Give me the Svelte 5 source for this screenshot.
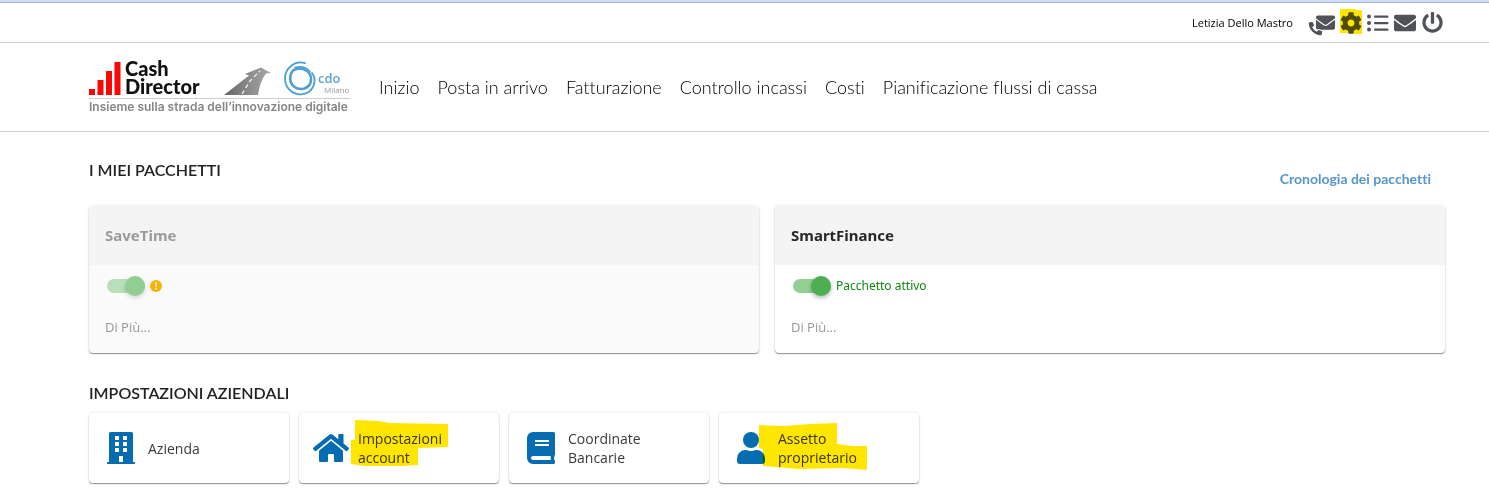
<script>
  const nav = ['Inizio', 'Posta in arrivo', 'Fatturazione', 'Controllo incassi', 'Costi', 'Pianificazione flussi di cassa'];

  const envelope =
    'M502.3 190.8c3.9-3.1 9.7-.2 9.7 4.7V400c0 26.5-21.5 48-48 48H48c-26.5 0-48-21.5-48-48V195.6c0-5 5.7-7.8 9.7-4.7 22.4 17.4 52.1 39.5 154.1 113.6 21.1 15.4 56.7 47.8 92.2 47.6 35.7.3 72-32.8 92.3-47.6 102-74.1 131.6-96.3 154-113.7zM256 320c23.2.4 56.6-29.2 73.4-41.4 132.7-96.3 142.8-104.7 173.4-128.7 5.8-4.5 9.2-11.5 9.2-18.9v-19c0-26.5-21.5-48-48-48H48c-26.5 0-48 21.5-48 48v19c0 7.4 3.4 14.3 9.2 18.9 30.6 23.9 40.7 32.4 173.4 128.7 16.8 12.2 50.2 41.8 73.4 41.4z';
  const handset =
    'M497.39 361.8l-112-48a24 24 0 0 0-28 6.900l-49.600 60.600A370.66 370.66 0 0 1 130.600 204.110l60.600-49.600a23.940 23.940 0 0 0 6.900-28l-48-112A24.160 24.160 0 0 0 122.600.61l-104 24A24 24 0 0 0 0 48c0 256.500 207.900 464 464 464a24 24 0 0 0 23.400-18.600l24-104a24.290 24.290 0 0 0-14.010-27.600z';
  const gear =
    'M487.4 315.7l-42.6-24.6c4.3-23.2 4.3-47 0-70.2l42.6-24.6c4.9-2.8 7.1-8.6 5.5-14-11.1-35.6-30-67.8-54.7-94.6-3.8-4.1-10-5.1-14.8-2.3L380.8 110c-17.9-15.4-38.5-27.3-60.8-35.1V25.8c0-5.6-3.9-10.5-9.4-11.7-36.7-8.2-74.3-7.8-109.2 0-5.5 1.2-9.4 6.1-9.4 11.7V75c-22.2 7.9-42.8 19.8-60.8 35.1L88.7 85.5c-4.9-2.8-11-1.9-14.8 2.3-24.7 26.7-43.6 58.9-54.7 94.6-1.7 5.4.6 11.2 5.5 14L67.3 221c-4.3 23.2-4.3 47 0 70.2l-42.6 24.6c-4.9 2.8-7.1 8.6-5.5 14 11.1 35.6 30 67.8 54.7 94.6 3.8 4.1 10 5.1 14.8 2.3l42.6-24.6c17.9 15.4 38.5 27.3 60.8 35.1v49.2c0 5.6 3.9 10.5 9.4 11.7 36.7 8.2 74.3 7.8 109.2 0 5.5-1.2 9.4-6.1 9.4-11.7v-49.2c22.2-7.9 42.8-19.8 60.8-35.1l42.6 24.6c4.9 2.8 11 1.9 14.8-2.3 24.7-26.7 43.6-58.9 54.7-94.6 1.5-5.5-.7-11.3-5.6-14.1zM256 336c-44.1 0-80-35.9-80-80s35.9-80 80-80 80 35.9 80 80-35.9 80-80 80z';
  const power =
    'M400 54.1c63 45 104 118.6 104 201.9 0 136.8-110.8 247.7-247.5 248C120 504.3 8.2 393 8 256.4 7.9 173.1 48.9 99.3 111.8 54.2c11.7-8.3 28-4.8 35 7.7L162.6 90c5.9 10.5 3.1 23.8-6.6 31-41.5 30.8-68 79.6-68 134.9-.1 92.3 74.5 168.1 168 168.1 91.6 0 168.6-74.2 168-169.1-.3-51.8-24.7-101.8-68.1-134-9.7-7.2-12.4-20.5-6.5-30.9l15.8-28.1c7-12.4 23.2-16.1 34.8-7.8zM296 264V24c0-13.3-10.7-24-24-24h-32c-13.3 0-24 10.7-24 24v240c0 13.3 10.7 24 24 24h32c13.3 0 24-10.7 24-24z';

  let packages = [
    { id: 'savetime', name: 'SaveTime', on: true, muted: true },
    { id: 'smartfinance', name: 'SmartFinance', on: true, muted: false }
  ];
</script>

<div class="strip"></div>

<div class="topbar">
  <span class="user">Letizia Dello Mastro</span>
  <div class="tools">
    <button class="tool wide" aria-label="Contatti">
      <svg width="26" height="24" viewBox="0 0 26 24">
        <svg x="8" y="0" width="19" height="19" viewBox="0 0 512 512"><path d={envelope} /></svg>
        <svg class="handset" x="0" y="8" width="15" height="15" viewBox="-30 -30 572 572"><path d={handset} /></svg>
      </svg>
    </button>
    <button class="tool" aria-label="Impostazioni">
      <svg width="22" height="22" viewBox="0 0 512 512"><path d={gear} /></svg>
      <svg class="marker gear-mark" width="22" height="27" viewBox="0 0 22 27"><path d="M0 1H16V2H22V26H11V25H0z" /></svg>
    </button>
    <button class="tool" aria-label="Elenco">
      <svg width="22" height="18" viewBox="0 0 22 18">
        <circle cx="2" cy="2.500" r="2" /><circle cx="2" cy="9" r="2" /><circle cx="2" cy="15.500" r="2" />
        <rect x="7" y="1.500" width="14.500" height="2.200" rx="1" /><rect x="7" y="8" width="14.500" height="2.200" rx="1" /><rect x="7" y="14.500" width="14.500" height="2.200" rx="1" />
      </svg>
    </button>
    <button class="tool" aria-label="Messaggi">
      <svg width="22" height="22" viewBox="0 0 512 512"><path d={envelope} /></svg>
    </button>
    <button class="tool" aria-label="Esci">
      <svg width="21" height="21" viewBox="0 0 512 512"><path d={power} /></svg>
    </button>
  </div>
</div>

<header>
  <a class="logo" href="#home" aria-label="Cash Director">
    <svg width="262" height="56" viewBox="0 0 262 56">
      <defs>
        <linearGradient id="road" x1="0" y1="0" x2="1" y2="0">
          <stop offset="0" stop-color="#666" /><stop offset="1" stop-color="#aaa" />
        </linearGradient>
      </defs>
      <g fill="#fb0507">
        <rect x="0" y="28" width="6" height="6" /><rect x="8.500" y="19" width="6" height="15" />
        <rect x="17" y="10" width="6" height="24" /><rect x="25.500" y="1" width="6" height="33" />
      </g>
      <text class="brand" x="36" y="15">Cash</text>
      <text class="brand" x="36" y="33">Director</text>
      <path fill="url(#road)" d="M135 34 160 14.500 156 13 172 6.500 182 12 177 12.500Q171 20 169 34Z" />
      <path fill="none" stroke="#fff" stroke-width="1.200" stroke-dasharray="4 3" d="M153 33 161 20 171 10" />
      <g fill="none" stroke="#4b9fd5" stroke-linecap="round">
        <path stroke-width="1.800" d="M216 2.200C206 -1 196 7 196 17.500C196 28 205 34.500 214 33.200C224 31.500 229 20 223 12" />
        <path stroke-width="2.600" d="M204 9.500C213 4 223 11 222 19.500C221 28 211 30 205.500 26C200 22 200 14 204 9.500" />
        <path stroke-width="1.500" d="M206 6.500C211 5 217 6 221 10.500" />
      </g>
      <text class="cdo" x="229" y="22">cdo</text>
      <text class="city" x="235" y="32">Milano</text>
      <rect x="0" y="37" width="261" height="1" fill="#ccc" />
      <text class="slogan" x="0" y="50">Insieme sulla strada dell’innovazione digitale</text>
    </svg>
  </a>
  <nav>
    {#each nav as item}<a href="#nav">{item}</a>{/each}
  </nav>
</header>

<main>
  <div class="heading">
    <h2>I MIEI PACCHETTI</h2>
    <a class="history" href="#cronologia">Cronologia dei pacchetti</a>
  </div>

  <div class="packages">
    {#each packages as p}
      <section class="package" class:muted={p.muted}>
        <h3>{p.name}</h3>
        <div class="body">
          <div class="state">
            <input id={p.id} class="switch" type="checkbox" role="switch" bind:checked={p.on} aria-label={p.name} />
            {#if p.muted}
              <svg class="warn" width="12" height="12" viewBox="0 0 12 12">
                <circle cx="6" cy="6" r="6" fill="#fbb003" />
                <path d="M5.100 2.600h1.800L6.600 6.900H5.400z" fill="#fff" /><circle cx="6" cy="8.700" r=".9" fill="#fff" />
              </svg>
            {:else}
              <label for={p.id}>Pacchetto attivo</label>
            {/if}
          </div>
          <a class="more" href="#more">Di Più...</a>
        </div>
      </section>
    {/each}
  </div>

  <h2>IMPOSTAZIONI AZIENDALI</h2>
  <div class="tiles">
    <a class="tile" href="#azienda">
      <span class="icon">
        <svg width="28" height="32" viewBox="0 0 28 32">
          <path fill-rule="evenodd" d="M3.500 0h21A1.500 1.500 0 0 1 26 1.500V30h1.200a.8.800 0 0 1 .8.800V32H0v-1.200A.8.800 0 0 1 .8 30H2V1.500A1.500 1.500 0 0 1 3.500 0zM8 4v4h4V4zM16 4v4h4V4zM8 10v4h4v-4zM16 10v4h4v-4zM8 16v4h4v-4zM16 16v4h4v-4zM12 24v6h4v-6z" />
        </svg>
      </span>
      <span>Azienda</span>
    </a>
    <a class="tile" href="#account">
      <span class="icon">
        <svg width="36" height="28" viewBox="0 0 36 28">
          <path d="M17.500 7.300 6 16.800V27a1 1 0 0 0 1 1h7a1 1 0 0 0 1-1v-6a1 1 0 0 1 1-1h4a1 1 0 0 1 1 1v6a1 1 0 0 0 1 1h7a1 1 0 0 0 1-1V16.700L18.600 7.300a.9.900 0 0 0-1.100 0z" />
          <path d="M35.700 13.700 30.500 9.400V.8a.8.800 0 0 0-.8-.8h-3.600a.8.800 0 0 0-.8.800v4.500L19.700.700a2.700 2.700 0 0 0-3.400 0L.3 13.700a.8.800 0 0 0-.1 1.200l1.600 2a.8.800 0 0 0 1.200.1L17.500 5.200a.9.900 0 0 1 1 0L33 17a.8.800 0 0 0 1.200-.1l1.600-2a.8.800 0 0 0-.1-1.200z" />
        </svg>
      </span>
      <span>Impostazioni account</span>
      <svg class="marker account-mark" width="98" height="46" viewBox="0 0 98 46"><path d="M4 0 28 1 38 3 97 4V27L67 28V45L52 46H14L0 44V20H4z" /></svg>
    </a>
    <a class="tile" href="#banca">
      <span class="icon">
        <svg width="28" height="32" viewBox="0 0 28 32">
          <path fill-rule="evenodd" d="M6 0H26.500A1.500 1.500 0 0 1 28 1.500V22.500A1.500 1.500 0 0 1 27.400 23.700Q26.800 26 27.400 28.300A1.500 1.500 0 0 1 28 29.500V30.500A1.500 1.500 0 0 1 26.500 32H6A6 6 0 0 1 0 26V6A6 6 0 0 1 6 0zM8.400 8a.4.400 0 0 0-.4.400v1.200c0 .2.200.4.400.4h13.200a.4.400 0 0 0 .4-.4V8.400a.4.400 0 0 0-.4-.4zM8.400 12a.4.400 0 0 0-.4.400v1.200c0 .2.200.4.400.4h13.200a.4.400 0 0 0 .4-.4v-1.200a.4.400 0 0 0-.4-.4zM6 24a2 2 0 0 0 0 4H23.800Q23.500 26 23.800 24z" />
        </svg>
      </span>
      <span>Coordinate Bancarie</span>
    </a>
    <a class="tile" href="#assetto">
      <span class="icon">
        <svg width="28" height="32" viewBox="0 0 28 32">
          <circle cx="14" cy="8" r="8" />
          <path d="M19.600 18h-1a11 11 0 0 1-9.200 0h-1A8.400 8.400 0 0 0 0 26.400V29a3 3 0 0 0 3 3H25a3 3 0 0 0 3-3V26.400A8.400 8.400 0 0 0 19.600 18z" />
        </svg>
      </span>
      <span>Assetto proprietario</span>
      <svg class="marker owner-mark" width="109" height="48" viewBox="0 0 109 48"><path d="M0 2 24 3 52 1 78 0V21L94 23H108V47L84 45 40 46 4 43V26L0 25z" /></svg>
    </a>
  </div>
</main>

<style>
  :global(body) {
    margin: 0;
    background: #fff;
    color: #272727;
    font-family: 'Open Sans', sans-serif;
    font-variant-ligatures: none;
  }
  a { color: inherit; text-decoration: none; }
  svg { display: block; flex: none; overflow: visible; }
  .strip { height: 2px; background: #cfdff8; border-bottom: 1px solid #a3b5cf; }
  .topbar {
    display: flex;
    align-items: center;
    justify-content: flex-end;
    gap: 14px;
    height: 39px;
    padding-right: 46px;
    border-bottom: 1px solid #cfcfcf;
  }
  .user { font-size: 11px; color: #000; }
  .tools { display: flex; align-items: center; gap: 5px; }
  .tool {
    position: relative;
    display: grid;
    place-items: center;
    width: 22px;
    height: 26px;
    padding: 0;
    border: 0;
    background: none;
    fill: #4f5357;
  }
  .tool.wide { width: 28px; padding-top: 3px; }
  .handset { stroke: #fff; stroke-width: 70px; paint-order: stroke; }
  .marker { position: absolute; fill: #ffe600; mix-blend-mode: multiply; pointer-events: none; }
  .gear-mark { left: 0; top: -2px; }
  header {
    display: flex;
    align-items: center;
    gap: 28px;
    height: 88px;
    padding-left: 89px;
    border-bottom: 1px solid #cfcfcf;
  }
  .logo { padding-top: 4px; }
  .brand { font: 900 20px Lato, sans-serif; fill: #111; }
  .cdo { font: 600 13px 'Open Sans', sans-serif; fill: #5ba6d8; }
  .city { font: 400 8px 'Open Sans', sans-serif; fill: #999; }
  .slogan { font: 600 12px Inter, sans-serif; fill: #858585; }
  nav { display: flex; gap: 18px; font: 300 18px/24px Lato, sans-serif; color: #000; font-variant-ligatures: none; }
  main { padding: 28px 44px 16px 89px; }
  h2 { margin: 0; font: 600 16px/20px Lato, sans-serif; color: #222; }
  .heading { display: flex; justify-content: space-between; height: 46px; }
  .history { margin: 9px 14px 0 0; font: 700 14px/20px Lato, sans-serif; color: #5596ca; font-variant-ligatures: none; }
  .packages { display: grid; grid-template-columns: 1fr 1fr; gap: 16px; margin-bottom: 30px; }
  .package, .tile {
    border-radius: 4px;
    background: #fff;
    box-shadow: 0 1px 1px rgba(0, 0, 0, .4), 0 0 3px rgba(0, 0, 0, .14);
  }
  .package { overflow: hidden; }
  h3 { margin: 0; padding: 18px 16px; background: #f4f4f4; font: 700 15px/23px 'Noto Sans', sans-serif; }
  .body { padding: 10px 16px 16px; }
  .state { display: flex; align-items: center; gap: 5px; height: 22px; padding-left: 2px; }
  .switch {
    appearance: none;
    position: relative;
    width: 38px;
    height: 14px;
    margin: 0;
    border-radius: 7px;
    background: #94cf96;
  }
  .switch::before {
    content: '';
    position: absolute;
    right: 0;
    top: -3px;
    width: 20px;
    height: 20px;
    border-radius: 50%;
    background: #4caf50;
    box-shadow: 0 2px 4px rgba(0, 0, 0, .3);
  }
  .switch:not(:checked)::before { right: auto; left: 0; }
  label { font: 12px/20px 'Noto Sans', sans-serif; color: #0d8a0d; }
  .more { display: block; margin-top: 20px; font-size: 13px; line-height: 20px; color: #999; }
  .muted { background: #fafafa; }
  .muted h3 { color: #9b9b9b; }
  .muted .switch { background: #b9dfba; }
  .muted .switch::before { background: #91ce93; box-shadow: 0 2px 4px rgba(0, 0, 0, .15); }
  .tiles { display: flex; flex-wrap: wrap; gap: 10px; margin-top: 10px; }
  .tile {
    position: relative;
    display: flex;
    align-items: center;
    gap: 9px;
    box-sizing: border-box;
    width: 200px;
    height: 70px;
    padding: 0 42px 0 14px;
    font-size: 14px;
    line-height: 19px;
    color: #3a3a3a;
  }
  .icon { display: grid; place-items: center; flex: none; width: 36px; fill: #056cb1; }
  .account-mark { left: 52px; top: 7px; }
  .owner-mark { left: 40px; top: 10px; }
</style>
